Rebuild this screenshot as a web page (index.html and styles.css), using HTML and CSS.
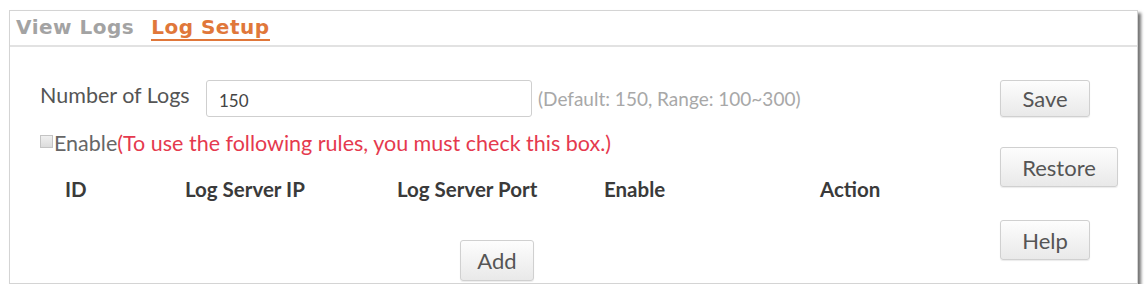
FILE: index.html
```html
<!DOCTYPE html>
<html lang="en">
<head>
    <meta charset="UTF-8">
    <title>Log Setup</title>
    <link rel="stylesheet" href="styles.css">
</head>
<body>
    <div class="panel">
        <div class="tabs">
            <span class="tab">View Logs</span>
            <span class="tab active">Log Setup</span>
        </div>
        <div class="content">
            <div class="main">
                <div class="row">
                    <label class="label">Number of Logs</label>
                    <input type="text" class="num-input" value="150">
                    <span class="hint">(Default: 150, Range: 100~300)</span>
                </div>
                <div class="check-row">
                    <span class="checkbox"></span>
                    <span class="check-label">Enable</span><span class="warn">(To use the following rules, you must check this box.)</span>
                </div>
                <div class="table-head">
                    <span>ID</span>
                    <span>Log Server IP</span>
                    <span>Log Server Port</span>
                    <span>Enable</span>
                    <span>Action</span>
                </div>
                <div class="add-row">
                    <button class="btn add-btn">Add</button>
                </div>
            </div>
            <div class="side">
                <button class="btn save-btn">Save</button>
                <button class="btn restore-btn">Restore</button>
                <button class="btn help-btn">Help</button>
            </div>
        </div>
    </div>
</body>
</html>
```

FILE: styles.css
```css
body {
    margin: 0;
    background: #fff;
    font-family: Lato, "Open Sans", sans-serif;
    color: #555;
}
.panel {
    margin: 10px 0 0 9px;
    width: 1127px;
    height: 272px;
    border: 1px solid #d4d4d4;
    background: #fff;
    box-shadow: 3px 3px 3px rgba(0, 0, 0, 0.55);
    display: flex;
    flex-direction: column;
}
.tabs {
    height: 34px;
    border-bottom: 2px solid #e2e2e2;
    display: flex;
    align-items: flex-start;
    padding-left: 6px;
    gap: 17px;
}
.tab {
    font-family: "DejaVu Sans", sans-serif;
    font-weight: bold;
    font-size: 20px;
    line-height: 23px;
    color: #a3a3a3;
    padding-top: 5px;
    letter-spacing: 0.5px;
}
.tab.active {
    color: #e0773a;
    border-bottom: 2px solid #e0773a;
}
.content {
    flex: 1;
    display: flex;
}
.main {
    flex: 1;
    padding: 32px 0 0 30px;
}
.row {
    display: flex;
    align-items: center;
    height: 38px;
}
.label {
    width: 166px;
    font-size: 21.5px;
    color: #555;
    margin-top: -6px;
}
.num-input {
    width: 326px;
    height: 37px;
    padding: 4px 0 0 12px;
    border: 1px solid #cfcfcf;
    border-radius: 3px;
    font-family: Lato, sans-serif;
    font-size: 17px;
    color: #444;
    box-sizing: border-box;
}
.hint {
    margin-left: 6px;
    font-size: 19px;
    color: #a8a8a8;
}
.check-row {
    display: flex;
    align-items: center;
    margin-top: 14px;
    font-size: 21.5px;
    line-height: 24px;
}
.checkbox {
    width: 11px;
    height: 11px;
    border: 1px solid #c4c4c4;
    background: linear-gradient(#f0f0f0, #dcdcdc);
    margin-right: 1px;
    margin-top: -4px;
}
.check-label {
    color: #666;
}
.warn {
    color: #e5394e;
}
.table-head {
    display: grid;
    grid-template-columns: 120px 212px 207px 216px 100px;
    padding-left: 25px;
    margin-top: 22px;
    font-size: 20.5px;
    line-height: 24px;
    font-weight: bold;
    color: #3a3a3a;
}
.add-row {
    margin-top: 39px;
    padding-left: 420px;
}
.btn {
    font-family: Lato, sans-serif;
    font-size: 22px;
    color: #555;
    border: 1px solid #d0d0d0;
    border-radius: 3px;
    background: linear-gradient(#fdfdfd, #e9e9e9);
    box-shadow: 0 1px 1px rgba(0, 0, 0, 0.08);
    cursor: pointer;
    padding: 0;
}
.add-btn {
    width: 74px;
    height: 41px;
}
.side {
    width: 137px;
    padding-top: 33px;
    display: flex;
    flex-direction: column;
    align-items: flex-start;
}
.save-btn {
    width: 90px;
    height: 37px;
}
.restore-btn {
    width: 118px;
    height: 40px;
    margin-top: 30px;
}
.help-btn {
    width: 90px;
    height: 40px;
    margin-top: 33px;
}
```
